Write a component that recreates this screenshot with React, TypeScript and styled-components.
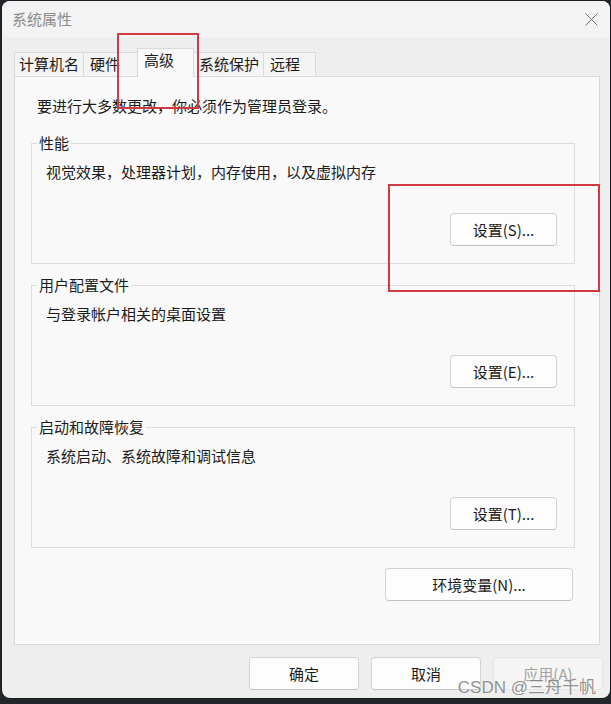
import React from "react";
import styled, { createGlobalStyle } from "styled-components";

const Global = createGlobalStyle`
  html, body { margin: 0; padding: 0; background: #23262b; }
  body {
    width: 611px; height: 704px; overflow: hidden;
    font-family: "Noto Sans CJK SC", "Noto Sans", sans-serif;
  }
  * { box-sizing: border-box; }
`;

const Window = styled.div`
  position: relative;
  margin: 1px 0 0 2px;
  width: 608px;
  height: 697px;
  background: #eeeeee;
  border-radius: 8px;
  box-shadow: 0 0 0 1px rgba(0, 0, 0, 0.25);
  overflow: hidden;
  display: flex;
  flex-direction: column;
  color: #1b1b1b;
  font-size: 15px;
`;

const TitleBar = styled.div`
  height: 36px;
  flex: none;
  display: flex;
  align-items: center;
  padding-left: 10px;
  background: #f3f3f3;
`;

const Title = styled.span`
  line-height: 20px;
  color: #8b8b8b;
`;

const Close = styled.svg`
  margin-left: auto;
  margin-right: 12px;
  width: 13px;
  height: 13px;
`;

const Body = styled.div`
  flex: 1;
  display: flex;
  flex-direction: column;
  padding: 11px 10px 0 12px;
`;

const TabStrip = styled.div`
  height: 28px;
  display: flex;
  align-items: flex-end;
`;

const Tab = styled.div<{ $w: number; $pad: number; $active?: boolean }>`
  width: ${(p) => p.$w}px;
  height: ${(p) => (p.$active ? 29 : 24)}px;
  margin-right: -1px;
  margin-bottom: ${(p) => (p.$active ? -1 : 0)}px;
  padding: ${(p) => (p.$active ? 1 : 1)}px 0 0 ${(p) => p.$pad}px;
  line-height: 20px;
  border: 1px solid #d9d9d9;
  border-bottom: none;
  background: ${(p) => (p.$active ? "#f9f9f9" : "#f4f4f4")};
  position: relative;
  z-index: ${(p) => (p.$active ? 2 : 1)};
  white-space: nowrap;
`;

const Panel = styled.div`
  display: flex;
  flex-direction: column;
  background: #f9f9f9;
  border: 1px solid #d9d9d9;
  padding: 19px 24px 43px 16px;
`;

const Notice = styled.div`
  line-height: 20px;
  padding-left: 6px;
  margin-bottom: 27px;
`;

const Group = styled.div`
  display: flex;
  flex-direction: column;
  border: 1px solid #dcdcdc;
  padding: 0 17px 17px 14px;
  & + & { margin-top: 21px; }
`;

const Legend = styled.span`
  align-self: flex-start;
  margin: -11px 0 0 -9px;
  padding: 0 2px;
  line-height: 20px;
  background: #f9f9f9;
`;

const Desc = styled.div`
  margin-top: 9px;
  line-height: 20px;
`;

const Button = styled.button<{ $w: number; $disabled?: boolean }>`
  width: ${(p) => p.$w}px;
  height: 33px;
  flex: none;
  border-radius: 4px;
  border: 1px solid ${(p) => (p.$disabled ? "#e6e6e6" : "#d2d2d2")};
  border-bottom-color: ${(p) => (p.$disabled ? "#e6e6e6" : "#c2c2c2")};
  background: ${(p) => (p.$disabled ? "#f5f5f5" : "#fdfdfd")};
  color: ${(p) => (p.$disabled ? "#a3a3a3" : "#1b1b1b")};
  font: inherit;
  font-size: 15px;
  line-height: 20px;
  padding: 0;
`;

const GroupButton = styled(Button)`
  align-self: flex-end;
  margin-top: 31px;
`;

const EnvRow = styled.div`
  display: flex;
  justify-content: flex-end;
  margin-top: 20px;
  padding-right: 2px;
`;

const Footer = styled.div`
  display: flex;
  justify-content: flex-end;
  gap: 12px;
  margin: 12px -3px 0 0;
`;

const Mark = styled.div<{ $x: number; $y: number; $w: number; $h: number }>`
  position: absolute;
  left: ${(p) => p.$x}px;
  top: ${(p) => p.$y}px;
  width: ${(p) => p.$w}px;
  height: ${(p) => p.$h}px;
  border: 2px solid #d03a40;
  pointer-events: none;
  z-index: 5;
`;

const Watermark = styled.div`
  position: absolute;
  right: 14px;
  bottom: 0px;
  line-height: 20px;
  font-size: 17px;
  font-family: "Liberation Sans", "Noto Sans CJK SC", sans-serif;
  color: rgba(115, 115, 115, 0.8);
  text-shadow: 0 0 2px rgba(255, 255, 255, 0.9);
  z-index: 6;
  white-space: nowrap;
`;

const tabs = [
  { label: "计算机名", w: 70, pad: 4 },
  { label: "硬件", w: 55, pad: 6 },
  { label: "高级", w: 57, pad: 6, active: true },
  { label: "系统保护", w: 71, pad: 5 },
  { label: "远程", w: 53, pad: 6 },
];

const groups = [
  { title: "性能", desc: "视觉效果，处理器计划，内存使用，以及虚拟内存", btn: "设置(S)..." },
  { title: "用户配置文件", desc: "与登录帐户相关的桌面设置", btn: "设置(E)..." },
  { title: "启动和故障恢复", desc: "系统启动、系统故障和调试信息", btn: "设置(T)..." },
];

export default function App() {
  return (
    <>
      <Global />
      <Window>
        <TitleBar>
          <Title>系统属性</Title>
          <Close viewBox="0 0 13 13">
            <path d="M0.5 0.5 L12.5 12.5 M12.5 0.5 L0.5 12.5" stroke="#6f6f6f" strokeWidth="1" fill="none" />
          </Close>
        </TitleBar>
        <Body>
          <TabStrip>
            {tabs.map((t) => (
              <Tab key={t.label} $w={t.w} $pad={t.pad} $active={t.active}>
                {t.label}
              </Tab>
            ))}
          </TabStrip>
          <Panel>
            <Notice>要进行大多数更改，你必须作为管理员登录。</Notice>
            {groups.map((g) => (
              <Group key={g.title}>
                <Legend>{g.title}</Legend>
                <Desc>{g.desc}</Desc>
                <GroupButton $w={107}>{g.btn}</GroupButton>
              </Group>
            ))}
            <EnvRow>
              <Button $w={188}>环境变量(N)...</Button>
            </EnvRow>
          </Panel>
          <Footer>
            <Button $w={110}>确定</Button>
            <Button $w={110}>取消</Button>
            <Button $w={110} $disabled>应用(A)</Button>
          </Footer>
        </Body>
        <Mark $x={115} $y={32} $w={82} $h={76} />
        <Mark $x={386} $y={183} $w={212} $h={108} />
        <Watermark>CSDN @三舟千帆</Watermark>
      </Window>
    </>
  );
}
